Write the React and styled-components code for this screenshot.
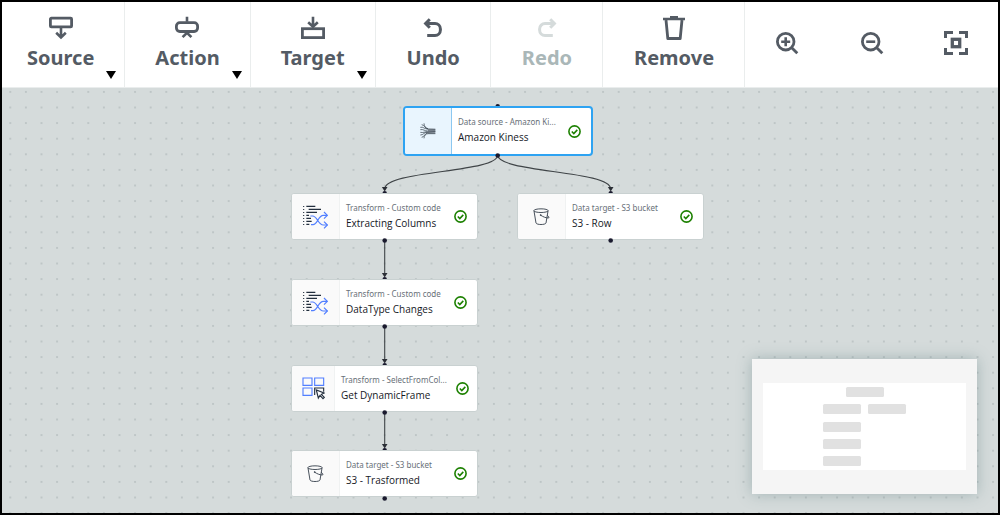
import React from "react";
import styled, { createGlobalStyle, css } from "styled-components";

const GlobalStyle = createGlobalStyle`
  *, *::before, *::after { box-sizing: border-box; }
  body {
    margin: 0;
    font-family: "Noto Sans", "Open Sans", sans-serif;
    color: #16191f;
  }
`;

const Frame = styled.div`
  display: flex;
  flex-direction: column;
  min-height: 100vh;
  border: 2px solid #000;
  background: #fff;
`;

const Toolbar = styled.header`
  display: flex;
  height: 86px;
  background: #fff;
  border-bottom: 1px solid #eaeded;
`;

const ToolButton = styled.button`
  position: relative;
  display: flex;
  flex-direction: column;
  align-items: center;
  gap: 4px;
  padding: 14px 30px 0 ${(p) => (p.$menu ? 30 : 31)}px;
  border: 0;
  border-right: 1px solid #eaeded;
  background: none;
  color: #545b64;
  font: 700 20px/27px "Noto Sans", "Open Sans", sans-serif;
  cursor: pointer;

  &:first-child { padding-left: 25px; }
  &:disabled { color: #aab7b8; cursor: default; }
  &:disabled svg { color: #d5dbdb; }
`;

const ToolIcon = styled.svg`
  display: block;
  width: 24px;
  height: 24px;
  fill: none;
  stroke: currentColor;
  stroke-width: 3;
`;

const Caret = styled.svg`
  position: absolute;
  right: 8px;
  bottom: 8px;
  width: 10px;
  height: 8px;
  fill: #000;
`;

const ViewTools = styled.div`
  display: flex;
  flex: 1;
  padding-bottom: 4px;
`;

const ViewButton = styled.button`
  display: flex;
  flex: 1;
  align-items: center;
  justify-content: center;
  padding: 0;
  border: 0;
  background: none;
  color: #545b64;
  cursor: pointer;
`;

const Canvas = styled.main`
  position: relative;
  flex: 1;
  min-height: 425px;
  overflow: hidden;
  background: #d5dbdb;
`;

const CanvasLayer = styled.svg`
  position: absolute;
  inset: 0;
  width: 100%;
  height: 100%;
  pointer-events: none;
`;

const Node = styled.article`
  position: absolute;
  left: ${(p) => p.$x}px;
  top: ${(p) => p.$y}px;
  display: flex;
  width: ${(p) => (p.$selected ? 190 : 187)}px;
  height: ${(p) => (p.$selected ? 50 : 47)}px;
  overflow: hidden;
  background: #fff;
  border: 1px solid #c9d1d1;
  border-radius: 3px;
  ${(p) =>
    p.$selected &&
    css`
      border: 2px solid #2ea3f2;
      border-radius: 4px;
    `}
`;

const NodeIcon = styled.div`
  display: flex;
  flex: none;
  align-items: center;
  justify-content: center;
  width: ${(p) => (p.$narrow ? 43 : p.$selected ? 47 : 48)}px;
  background: ${(p) => (p.$selected ? "#e9f5fe" : "#fafafa")};
  border-right: 1px solid ${(p) => (p.$selected ? "#8cc8f0" : "#f0f2f2")};
`;

const NodeText = styled.div`
  display: flex;
  flex: 1;
  flex-direction: column;
  justify-content: center;
  min-width: 0;
  padding-left: 6px;
  white-space: nowrap;
`;

const NodeKind = styled.span`
  font-size: 8px;
  line-height: 12px;
  color: #687078;
`;

const NodeName = styled.span`
  font-family: "Open Sans", "Noto Sans", sans-serif;
  font-size: 10px;
  line-height: 18px;
  color: #16191f;
`;

const Status = styled.svg`
  flex: none;
  align-self: center;
  width: 13px;
  height: 13px;
  margin-right: ${(p) => (p.$narrow ? 8 : 10)}px;
  fill: none;
  stroke: #1d8102;
`;

const Minimap = styled.aside`
  position: absolute;
  right: 21px;
  bottom: 19px;
  padding: 24px 11px;
  background: #f5f5f5;
  box-shadow: 0 0 14px rgba(84, 120, 122, 0.4);
`;

const MinimapView = styled.svg`
  display: block;
  width: 203px;
  height: 87px;
  background: #fff;
  fill: #e1e1e1;
`;

const Glyph = styled.svg`
  display: block;
  fill: none;
`;

function SourceIcon() {
  return (
    <ToolIcon viewBox="0 0 24 24" aria-hidden="true">
      <rect x="1.4" y="2.1" width="21.2" height="8.8" rx="1" strokeWidth="2.8" />
      <path d="M12 12v10M7.2 16.8l4.8 4.6 4.8-4.6" strokeWidth="2.6" />
    </ToolIcon>
  );
}

function ActionIcon() {
  return (
    <ToolIcon viewBox="0 0 24 24" aria-hidden="true">
      <rect x="1.4" y="6.7" width="21.2" height="8.8" rx="3.4" strokeWidth="2.8" />
      <path d="M12 .7v5M7.6 21.2l4.4-4.4 4.4 4.4" strokeWidth="2.6" />
    </ToolIcon>
  );
}

function TargetIcon() {
  return (
    <ToolIcon viewBox="0 0 24 24" aria-hidden="true">
      <rect x="1.4" y="12.7" width="21.2" height="8.9" strokeWidth="2.8" />
      <path d="M12 .7v10M7.2 6.2l4.8 4.6 4.8-4.6" strokeWidth="2.6" />
    </ToolIcon>
  );
}

function UndoIcon() {
  return (
    <ToolIcon viewBox="0 0 24 24" aria-hidden="true">
      <path d="M8.8 3.3L4.6 7.5l4.2 4.3M4.8 7.5H14a5.4 5.4 0 0 1 5.4 5.4v1.2a5.4 5.4 0 0 1-5.4 5.4H6.2" />
    </ToolIcon>
  );
}

function RedoIcon() {
  return (
    <ToolIcon viewBox="0 0 24 24" aria-hidden="true">
      <path d="M15.2 3.3l4.2 4.2-4.2 4.3M19.2 7.5H10a5.4 5.4 0 0 0-5.4 5.4v1.2a5.4 5.4 0 0 0 5.4 5.4h7.8" />
    </ToolIcon>
  );
}

function TrashIcon() {
  return (
    <ToolIcon viewBox="0 0 24 24" aria-hidden="true">
      <path d="M1 3h22M8 1.3h8" strokeWidth="2.6" />
      <path d="M4 4l1.8 18.5h12.4L20 4" strokeWidth="2.8" strokeLinejoin="round" />
    </ToolIcon>
  );
}

function ZoomIcon({ plus }) {
  return (
    <ToolIcon viewBox="0 0 24 24" aria-hidden="true">
      <circle cx="10.7" cy="10.7" r="8.3" strokeWidth="2.8" />
      <path d="M16.7 16.7l5.6 5.6" strokeWidth="2.8" />
      <path d={plus ? "M6.2 10.7h9M10.7 6.2v9" : "M6.2 10.7h9"} strokeWidth="2.6" />
    </ToolIcon>
  );
}

function FitIcon() {
  return (
    <ToolIcon viewBox="0 0 24 24" aria-hidden="true">
      <path d="M1.5 7V1.5H9M15 1.5h7.5V7M22.5 17v5.5H15M9 22.5H1.5V17" />
      <rect x="8.3" y="8.3" width="7.4" height="7.4" strokeWidth="3.3" />
    </ToolIcon>
  );
}

function StreamGlyph() {
  return (
    <Glyph width="16" height="16" viewBox="0 0 48 48" aria-hidden="true">
      <path d="M24 17h22v15H24z" fill="#9aa3ad" />
      <g stroke="#3a4450" strokeWidth="2.2">
        <path d="M1 13c10-2 10 4 20 5l25 1" />
        <path d="M5 5c9 1 9 11 19 13" />
        <path d="M12 1c0 9 5 14 12 16" />
        <path d="M1 20c9-2 13 4 22 4h23" />
        <path d="M1 28c9 2 13-2 22-2" />
        <path d="M1 36c10 0 10-8 20-8l25-2" />
        <path d="M5 43c7 0 9-12 19-14" />
        <path d="M12 46c0-9 6-14 12-14h22" />
      </g>
    </Glyph>
  );
}

function ScriptGlyph() {
  return (
    <Glyph width="25" height="24" viewBox="0 0 75 72" aria-hidden="true">
      <g stroke="#232f3e" strokeWidth="3.4">
        <path d="M2 3v60" strokeDasharray="3 6" />
        <path d="M10 4h27M17 13h37M10 22h32M10 31h8M10 40h14M10 49h16M10 58h9" />
      </g>
      <g stroke="#527fff" strokeWidth="3.6">
        <path d="M22 33h7c14 0 16 27 32 27h12M24 59h6c14 0 15-28 31-28h12" />
        <path d="M63 21l10 10-10 10M63 50l10 10-10 10" />
      </g>
    </Glyph>
  );
}

function SelectGlyph() {
  return (
    <Glyph width="23" height="23" viewBox="0 0 69 69" aria-hidden="true">
      <g stroke="#527fff" strokeWidth="3.4">
        <path d="M3 3h27v22H3zM38 3h27v22H38zM3 33h27v22H3z" />
      </g>
      <g stroke="#232f3e" strokeWidth="3.4">
        <path d="M38 54V33h27v11" />
        <path d="M43 39l6 24 5-8 9 10 4-4-9-9 8-4z" fill="#fff" />
      </g>
    </Glyph>
  );
}

function BucketGlyph() {
  return (
    <Glyph width="17" height="18" viewBox="0 0 51 54" aria-hidden="true">
      <g stroke="#3a4450" strokeWidth="2.8">
        <ellipse cx="24" cy="8" rx="21.5" ry="5.5" />
        <path d="M3 9l6 36c2 6 28 6 30 0l6-36" />
        <path d="M22 21c9 6 17 9 25 9 2-3-1-6-5-8" />
      </g>
      <circle cx="23" cy="21" r="2.6" fill="#3a4450" />
    </Glyph>
  );
}

const tools = [
  { label: "Source", Icon: SourceIcon, menu: true },
  { label: "Action", Icon: ActionIcon, menu: true },
  { label: "Target", Icon: TargetIcon, menu: true },
  { label: "Undo", Icon: UndoIcon },
  { label: "Redo", Icon: RedoIcon, disabled: true },
  { label: "Remove", Icon: TrashIcon },
];

const nodes = [
  { x: 401, y: 18, kind: "Data source - Amazon Ki...", name: "Amazon Kiness", Icon: StreamGlyph, selected: true },
  { x: 289, y: 105, kind: "Transform - Custom code", name: "Extracting Columns", Icon: ScriptGlyph },
  { x: 515, y: 105, kind: "Data target - S3 bucket", name: "S3 - Row", Icon: BucketGlyph },
  { x: 289, y: 191, kind: "Transform - Custom code", name: "DataType Changes", Icon: ScriptGlyph },
  { x: 289, y: 277, kind: "Transform - SelectFromCol...", name: "Get DynamicFrame", Icon: SelectGlyph, narrow: true },
  { x: 289, y: 362, kind: "Data target - S3 bucket", name: "S3 - Trasformed", Icon: BucketGlyph },
];

const edges = [
  "M496 67C496 85 383 82 383 101",
  "M496 67C496 85 609 82 609 101",
  "M383 152V187",
  "M383 238V273",
  "M383 324V359",
];

const arrows = [[383, 102], [609, 102], [383, 188], [383, 274], [383, 359]];
const inlets = [[496, 18], [383, 105], [609, 105], [383, 191], [383, 277], [383, 362]];
const outlets = [[496, 67], [383, 152], [609, 152], [383, 238], [383, 324], [383, 410]];
const thumbs = [[83, 4], [60, 21], [105, 21], [60, 39], [60, 56], [60, 73]];

export default function App() {
  return (
    <>
      <GlobalStyle />
      <Frame>
        <Toolbar>
          {tools.map(({ label, Icon, menu, disabled }) => (
            <ToolButton
              key={label}
              type="button"
              $menu={menu}
              disabled={disabled}
              aria-haspopup={menu ? "menu" : undefined}
            >
              <Icon />
              {label}
              {menu && (
                <Caret viewBox="0 0 10 8" aria-hidden="true">
                  <path d="M0 0h10L5 8z" />
                </Caret>
              )}
            </ToolButton>
          ))}
          <ViewTools>
            <ViewButton type="button" aria-label="Zoom in"><ZoomIcon plus /></ViewButton>
            <ViewButton type="button" aria-label="Zoom out"><ZoomIcon /></ViewButton>
            <ViewButton type="button" aria-label="Fit to screen"><FitIcon /></ViewButton>
          </ViewTools>
        </Toolbar>
        <Canvas>
          <CanvasLayer aria-hidden="true">
            <defs>
              <pattern id="grid" x="0.5" y="-3.9" width="15.6" height="15.6" patternUnits="userSpaceOnUse">
                <circle cx="7.8" cy="7.8" r="0.7" fill="#98a2a4" />
              </pattern>
            </defs>
            <rect width="100%" height="100%" fill="url(#grid)" />
          </CanvasLayer>
          {nodes.map(({ x, y, kind, name, Icon, selected, narrow }) => (
            <Node key={name} $x={x} $y={y} $selected={selected}>
              <NodeIcon $selected={selected} $narrow={narrow}><Icon /></NodeIcon>
              <NodeText>
                <NodeKind>{kind}</NodeKind>
                <NodeName>{name}</NodeName>
              </NodeText>
              <Status viewBox="0 0 13 13" $narrow={narrow} role="img" aria-label="Ready">
                <circle cx="6.5" cy="6.5" r="5.6" strokeWidth="1.6" />
                <path d="M3.8 6.5l2 2 3.5-3.6" strokeWidth="1.6" />
              </Status>
            </Node>
          ))}
          <CanvasLayer aria-hidden="true">
            <g fill="none" stroke="#3f4447" strokeWidth="1.1">
              {edges.map((d) => <path key={d} d={d} transform="translate(-.3 0)" />)}
            </g>
            <g fill="#2b2f36">
              {arrows.map(([x, y]) => <path key={`${x}-${y}`} d={`M${x - 3.1} ${y - 3}h5.6l-2.8 4.6z`} />)}
            </g>
            <g fill="#1a1a2e">
              {inlets.map(([x, y]) => <path key={`${x}-${y}`} d={`M${x - 2.5} ${y}a2.2 2 0 0 1 4.4 0z`} />)}
              {outlets.map(([x, y]) => <circle key={`${x}-${y}`} cx={x - 0.3} cy={y + 0.5} r="2.3" />)}
            </g>
          </CanvasLayer>
          <Minimap aria-label="Overview">
            <MinimapView viewBox="0 0 203 87">
              {thumbs.map(([x, y]) => <rect key={`${x}-${y}`} x={x} y={y} width="38" height="10" rx="1.5" />)}
            </MinimapView>
          </Minimap>
        </Canvas>
      </Frame>
    </>
  );
}
